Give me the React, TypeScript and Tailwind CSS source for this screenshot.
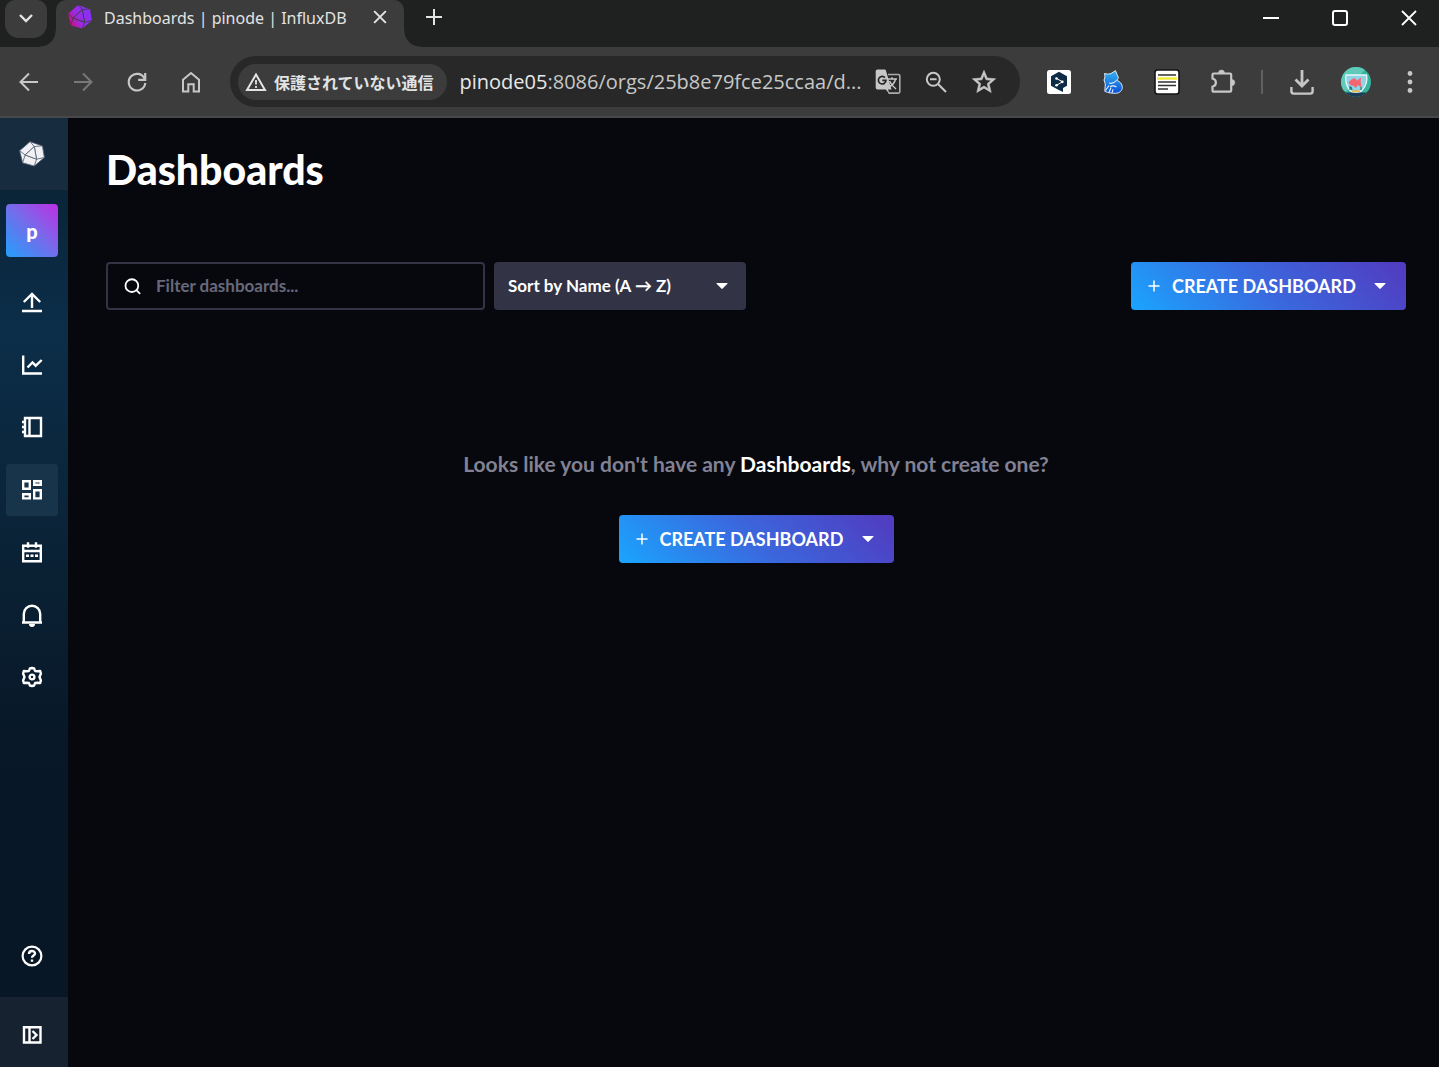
import React from "react";

type IconProps = { className?: string };

function Polyhedron({ fill, line, className }: { fill: string; line: string; className?: string }) {
  return (
    <svg viewBox="0 0 80 80" className={className} aria-hidden="true">
      <defs>
        <linearGradient id="brand" gradientUnits="userSpaceOnUse" x1="2" y1="60" x2="60" y2="30">
          <stop offset="0" stopColor="#d30971" />
          <stop offset="0.55" stopColor="#9a2be2" />
          <stop offset="1" stopColor="#8b2ff5" />
        </linearGradient>
      </defs>
      <g fill={fill} stroke={line} strokeWidth="2.500" strokeLinejoin="round">
        <path d="M34 2 72 15 78 51 47 77 11 67 2 30Z" />
        <path d="M2 30 34 2 47 17 19 43Z" />
        <path d="M47 17 72 15 78 51 54 56Z" />
        <path d="M19 43 54 56 47 77 11 67Z" />
        <path d="M47 17 54 56 19 43Z" />
      </g>
    </svg>
  );
}

function Line({ children, className = "size-6", width = 2 }: { children: React.ReactNode; className?: string; width?: number }) {
  return (
    <svg viewBox="0 0 24 24" fill="none" stroke="currentColor" strokeWidth={width} className={className} aria-hidden="true">
      {children}
    </svg>
  );
}

const Caret = ({ className }: IconProps) => (
  <svg viewBox="0 0 12 6" className={`h-1.5 w-3 ${className ?? ""}`} fill="currentColor" aria-hidden="true">
    <path d="M1 0h10q1 0 .4.7L6.7 5.600q-.7.7-1.400 0L.6.7Q0 0 1 0Z" />
  </svg>
);

function ToolButton({ label, className = "text-[#c7c7c7]", children }: { label: string; className?: string; children: React.ReactNode }) {
  return (
    <button type="button" aria-label={label} className={`flex h-12 w-[54px] shrink-0 items-center justify-center ${className}`}>
      {children}
    </button>
  );
}

function PillButton({ label, children }: { label: string; children: React.ReactNode }) {
  return (
    <button type="button" aria-label={label} className="flex h-12 w-12 shrink-0 items-center justify-center text-[#c7c7c7]">
      {children}
    </button>
  );
}

function TabStrip() {
  return (
    <div className="flex h-[47px] items-start bg-[#1f2120] text-[#e3e3e3]">
      <div className="flex h-full w-14 shrink-0 flex-col justify-between">
        <button type="button" aria-label="Search tabs" className="ml-[5px] flex h-[38px] w-[42px] items-center justify-center rounded-b-[14px] rounded-t-[10px] bg-[#3c3c3c]">
          <Line className="size-6" width={2.4}>
            <path d="m6 8 6 6 6-6" />
          </Line>
        </button>
        <div className="-mt-4 size-4 self-end bg-[radial-gradient(circle_at_0_0,transparent_15px,#3c3c3c_16px)]" />
      </div>
      <div className="flex h-full w-[348px] shrink-0 items-start rounded-t-[10px] bg-[#3c3c3c] pl-[11px] pr-[14px] pt-1">
        <Polyhedron fill="url(#brand)" line="#3c3c3c" className="size-[26px] shrink-0" />
        <span className="ml-[11px] flex-1 whitespace-nowrap font-['Noto_Sans',sans-serif] text-[16px] leading-[29px]">Dashboards | pinode | InfluxDB</span>
        <button type="button" aria-label="Close tab" className="flex h-[26px] w-5 items-center justify-center">
          <Line className="size-5" width={2.4}>
            <path d="m5 5 14 14M19 5 5 19" />
          </Line>
        </button>
      </div>
      <div className="size-4 shrink-0 self-end bg-[radial-gradient(circle_at_100%_0,transparent_15px,#3c3c3c_16px)]" />
      <button type="button" aria-label="New tab" className="ml-0.5 flex h-[34px] w-6 items-center justify-center">
        <Line className="size-6" width={2}>
          <path d="M12 4v16M4 12h16" />
        </Line>
      </button>
      <div className="ml-auto flex h-9 items-center gap-[53px] pr-[22px] text-white">
        <button type="button" aria-label="Minimize" className="size-4">
          <svg viewBox="0 0 16 16" className="size-4"><path d="M0 8h16" stroke="currentColor" strokeWidth="2" /></svg>
        </button>
        <button type="button" aria-label="Maximize" className="size-4">
          <svg viewBox="0 0 16 16" className="size-4"><rect x="1" y="1" width="14" height="14" rx="2" fill="none" stroke="currentColor" strokeWidth="2" /></svg>
        </button>
        <button type="button" aria-label="Close" className="size-4">
          <svg viewBox="0 0 16 16" className="size-4"><path d="m1 1 14 14M15 1 1 15" stroke="currentColor" strokeWidth="1.800" /></svg>
        </button>
      </div>
    </div>
  );
}

function Toolbar() {
  return (
    <div className="flex h-[71px] items-center border-b-2 border-[#47484b] bg-[#3c3c3c] px-0.5">
      <ToolButton label="Back">
        <Line><path d="M21 12H4M12 3.500 3.500 12l8.500 8.500" /></Line>
      </ToolButton>
      <ToolButton label="Forward" className="text-[#787878]">
        <Line><path d="M3 12h17M12 3.500l8.500 8.500-8.500 8.500" /></Line>
      </ToolButton>
      <ToolButton label="Reload">
        <Line width={2.2}>
          <path d="M19.500 8.500A8.300 8.300 0 1 0 20.300 13" />
          <path d="M20.200 3v6.800h-7" />
        </Line>
      </ToolButton>
      <ToolButton label="Home">
        <Line><path d="M4 21.500V9.700L12 3l8 6.700v11.800h-5.300v-7.300H9.300v7.300Z" /></Line>
      </ToolButton>
      <div className="ml-3 mr-3 flex h-[51px] min-w-0 flex-1 items-center rounded-full bg-[#282828] pl-2 pr-3">
        <button type="button" className="flex h-9 shrink-0 items-center rounded-full bg-[#3c3c3c] pl-[7px] pr-[13px] text-[#e3e3e3]">
          <svg viewBox="0 0 22 20" className="h-5 w-[22px]" aria-hidden="true">
            <path d="M11 2.500 20 18H2Z" fill="none" stroke="currentColor" strokeWidth="2" />
            <path d="M11 8v4.500M11 14v2" stroke="currentColor" strokeWidth="1.800" />
          </svg>
          <span className="ml-[7px] whitespace-nowrap font-['Noto_Sans_CJK_JP',sans-serif] text-base font-bold leading-6">保護されていない通信</span>
        </button>
        <div className="ml-[13px] min-w-0 flex-1 overflow-hidden whitespace-nowrap text-xl leading-7 text-[#c7c7c7]">
          <span className="text-[#e8e8e8]">pinode05</span>:8086/orgs/25b8e79fce25ccaa/d...
        </div>
        <PillButton label="Translate">
          <svg viewBox="0 0 26 26" className="size-[26px]" aria-hidden="true">
            <path d="M13 5.500h10.500a1.300 1.300 0 0 1 1.300 1.300v16a1.300 1.300 0 0 1-1.300 1.300H13.500" fill="none" stroke="#aaa" strokeWidth="1.600" />
            <path d="M12 10h10M17 8.300V10M20.500 10c-.7 3-3 6-5.500 7.500M14.500 12c1 2.500 3.500 5.500 6.500 8" fill="none" stroke="#c7c7c7" strokeWidth="1.500" />
            <path d="M2.500.5h7.200a1.300 1.300 0 0 1 1.200.9L16.500 20.500H13l1.800 5-4-5H2.500A1.800 1.800 0 0 1 .7 18.700V2.300A1.800 1.800 0 0 1 2.500.5Z" fill="#c7c7c7" />
            <path d="M10 8.600A3.800 3.800 0 1 0 11 11.300H7.300" fill="none" stroke="#282828" strokeWidth="1.700" />
          </svg>
        </PillButton>
        <PillButton label="Zoom">
          <Line>
            <circle cx="9.300" cy="9.300" r="6.500" />
            <path d="m14 14 8 8M6 9.300h6.600" />
          </Line>
        </PillButton>
        <PillButton label="Bookmark this page">
          <svg viewBox="0 0 24 24" className="size-7" fill="currentColor" stroke="currentColor" strokeWidth="0.500" aria-hidden="true">
            <path d="m22 9.240-7.190-.62L12 2 9.190 8.630 2 9.240l5.460 4.730L5.820 21 12 17.270 18.180 21l-1.630-7.030L22 9.240ZM12 15.400l-3.760 2.270 1-4.280-3.320-2.880 4.380-.38L12 6.100l1.710 4.040 4.380.38-3.320 2.880 1 4.280L12 15.400Z" />
          </svg>
        </PillButton>
      </div>
      <ToolButton label="DeepL">
        <svg viewBox="0 0 24 24" className="size-6" aria-hidden="true">
          <rect width="24" height="24" rx="2.500" fill="#fff" />
          <path d="M12 1.800 20 6.300v9.500l-4 2.300v4l-4.200-2.200L4 15.800V6.300Z" fill="#0f2b46" />
          <path d="m9.500 8.500 6 3.300-6 3.500" fill="none" stroke="#fff" strokeWidth="1" />
          <circle cx="9.500" cy="8.500" r="1.300" fill="#fff" /><circle cx="15.300" cy="11.800" r="1.400" fill="#fff" /><circle cx="9.500" cy="15.300" r="1.300" fill="#fff" />
        </svg>
      </ToolButton>
      <ToolButton label="Blue cat">
        <svg viewBox="0 0 20 24" className="h-6 w-5" aria-hidden="true">
          <defs><linearGradient id="cat" x1="0" y1="0" x2="0" y2="1"><stop offset="0" stopColor="#35b4ee" /><stop offset="1" stopColor="#0b4fd8" /></linearGradient></defs>
          <path d="M1.500 3.500 5 4.200 8 3.500 12.500.6 14 4.500l1.500 3.200-1.800 2.600C17 11.500 19.300 14 19.300 17.300c0 3.600-3 6-6.800 6-3.600 0-7.300-.3-10.700-2L2.300 14 1 10l1-3Z" fill="url(#cat)" stroke="#d9e8f5" strokeWidth="1" />
          <path d="M6 13c2 .8 5 .3 7.500-2.500M7 16.500c2.500-1 4.500-.8 6.500.5M2.500 20.500 6 15.500M6 22.500l2-5M9 22.800l1-3.500" fill="none" stroke="#e6f4ff" strokeWidth="1.100" />
        </svg>
      </ToolButton>
      <ToolButton label="Reader notes">
        <svg viewBox="0 0 26 26" className="size-[26px]" aria-hidden="true">
          <rect x="1" y="1" width="24" height="24" rx="2.500" fill="#fff" stroke="#151515" strokeWidth="1.600" />
          <path d="M4 6h18M4 13h18M4 16.500h18M4 20h10" stroke="#303030" strokeWidth="1.500" />
          <path d="M3 9.500h20" stroke="#f1ea3c" strokeWidth="2.500" />
        </svg>
      </ToolButton>
      <ToolButton label="Extensions">
        <svg viewBox="0 0.500 26 26" className="ml-1 size-[26px]" aria-hidden="true">
          <path d="M2.500 10V6.200q0-1.200 1.200-1.200H20q1.200 0 1.200 1.200V22q0 1.200-1.200 1.200H3.700q-1.200 0-1.200-1.200v-3.800c4.500-1 4.500-7.200 0-8.200Z" fill="none" stroke="currentColor" strokeWidth="2.200" />
          <path d="M8.500 4.500a3 3 0 0 1 6 0ZM21.700 11a3 3 0 0 1 0 6.200Z" fill="currentColor" stroke="currentColor" strokeWidth="0.500" />
        </svg>
      </ToolButton>
      <div className="flex w-[27px] shrink-0 justify-center"><div className="h-6 w-0.5 bg-[#606060]" /></div>
      <ToolButton label="Downloads">
        <svg viewBox="0 0 26 26" className="size-[26px]" fill="none" stroke="currentColor" strokeWidth="2.800" aria-hidden="true">
          <path d="M13 1v15M6.500 10.500 13 17l6.500-6.500" />
          <path d="M2.400 18v4.300q0 2.300 2.300 2.300h16.600q2.300 0 2.300-2.300V18" strokeWidth="2.400" />
        </svg>
      </ToolButton>
      <ToolButton label="Profile">
        <svg viewBox="0 0 30 30" className="size-[30px]" aria-hidden="true">
          <defs><clipPath id="avatar"><circle cx="15" cy="15" r="15" /></clipPath></defs>
          <g clipPath="url(#avatar)">
            <rect width="30" height="30" fill="#36b39d" />
            <path d="M0 0h26L6 24H0Z" fill="#5fcab8" />
            <rect y="25.500" width="30" height="5" fill="#1f3a55" />
            <path d="M5 8h20.500q1.800 8.500-4.500 15.500-1.500 1.500-4 1.500h-4q-2.500 0-4-1.500Q3.500 17 5 8Z" fill="#8fd3e6" stroke="#e8f8fb" strokeWidth="1.300" />
            <path d="M11 24q4-2 8 0v1h-8Z" fill="#f4b74a" />
            <path d="M7.500 15.500c1.500-2.500 4-3.500 6-4.500l2.500 2.500 4-3-.3 4.500.8 5.500-3.500-2.500-2.500 3-2-2.200c-2.500 0-4-1.300-5-3.300Z" fill="#f5646f" />
            <path d="M9 23v-4M11 23l-1-3M20 23v-3" stroke="#23796b" strokeWidth="1.200" />
          </g>
        </svg>
      </ToolButton>
      <ToolButton label="Menu">
        <svg viewBox="0 0 6 22" className="h-[22px] w-1.5" fill="currentColor" aria-hidden="true">
          <circle cx="3" cy="2.500" r="2.400" /><circle cx="3" cy="11" r="2.400" /><circle cx="3" cy="19.500" r="2.400" />
        </svg>
      </ToolButton>
    </div>
  );
}

const navItems: { label: string; icon: React.ReactNode }[] = [
  { label: "Load Data", icon: <path d="M2 21h20M12 18V4M3.800 12 12 4l8.200 8" /> },
  { label: "Data Explorer", icon: <path d="M3.200 2.500V20.500H22M7.500 14.500l5-5 3.200 3.200 6-5.700" /> },
  { label: "Notebooks", icon: <path d="M5 3h16v18H5ZM9.500 3v18M2 7h3M2 12h3M2 17h3" /> },
  { label: "Dashboards", icon: <path d="M3.200 3.200h6.600v7.600H3.200ZM14.200 3.200h6.600v3.600h-6.600ZM3.200 16.200h6.600v4.200H3.200ZM14.200 12.200h6.600v8.200h-6.600Z" /> },
  { label: "Tasks", icon: <path d="M3.200 5.700h17.600v15.600H3.200ZM3 11h18M8 2.300v5.500M16 2.300v5.500M6 15.700h3M10.500 15.700h3M15 15.700h3" /> },
  { label: "Alerts", icon: <><path d="M3.800 19v-8a8.200 8.200 0 0 1 16.400 0v8M2 19.500h20" /><path d="M9 21h6a3 3 0 0 1-6 0Z" fill="currentColor" stroke="none" /></> },
  { label: "Settings", icon: <><path d="M12 3 14.200 3.500 15 6l2.700.2 2.500-.2.700 2.500-1.400 3.500 1.400 3.500-.7 2.500-2.500-.2L15 18l-.8 2.500-2.200.5-2.200-.5L9 18l-2.700-.2-2.500.2-.7-2.500L4.500 12 3.100 8.500 3.800 6l2.500.2L9 6l.8-2.500Z" strokeLinejoin="round" /><circle cx="12" cy="12" r="2.400" /></> },
];

function Sidebar() {
  return (
    <nav aria-label="Main" className="flex w-[68px] shrink-0 flex-col bg-[linear-gradient(180deg,#0a2034_0%,#0a2438_8%,#0c2e49_22%,#0b253a_40%,#081828_65%,#081624_100%)] text-white">
      <a href="#home" aria-label="InfluxDB home" className="flex h-[72px] items-center bg-[#182c3f] pl-[19px]">
        <Polyhedron fill="#f1f1f5" line="#4d5a6b" className="size-[26px]" />
      </a>
      <a href="#org" aria-label="Organization pinode" className="ml-1.5 mt-[14px] flex h-[53px] w-[52px] items-center justify-center rounded-sm bg-[linear-gradient(45deg,#22a0fb,#7a68ea_55%,#be2ee4)] font-['Lato',sans-serif] text-xl font-black">
        p
      </a>
      <div className="ml-1.5 mt-[19px] flex h-[427px] w-[52px] flex-col justify-between">
        {navItems.map(({ label, icon }) => (
          <a
            key={label}
            href={`#${label}`}
            aria-label={label}
            className={`flex h-[52px] items-center justify-center rounded-[3px] ${label === "Dashboards" ? "bg-[#18344b]" : ""}`}
          >
            <Line className="size-6" width={2.4}>{icon}</Line>
          </a>
        ))}
      </div>
      <a href="#help" aria-label="Help" className="mb-[15px] ml-1.5 mt-auto flex h-[52px] w-[52px] items-center justify-center">
        <Line>
          <circle cx="12" cy="12" r="9.400" strokeWidth="2.200" />
          <path d="M9 10c0-4 6-3.800 6-.4 0 2-3 2-3 4.200M12 15.500v2.200" strokeWidth="2.400" />
        </Line>
      </a>
      <button type="button" aria-label="Expand sidebar" className="flex h-[70px] items-center justify-center bg-[#16222f] pt-1.5 pr-1">
        <Line width={2.4}><path d="M4 4.200h16.500v15.300H4ZM9.500 4v15.500M12.500 8l4 4-4 4" /></Line>
      </button>
    </nav>
  );
}

function CreateButton() {
  return (
    <button type="button" className="flex h-12 w-[275px] items-center rounded-sm bg-[linear-gradient(45deg,#1aa5ff,#3b66dc_50%,#523abf)] pl-[17px] pr-5 font-bold text-white">
      <svg viewBox="0 0 12 12" className="size-3" aria-hidden="true"><path d="M6 .5v11M.5 6h11" stroke="currentColor" strokeWidth="1.500" /></svg>
      <span className="ml-3 whitespace-nowrap text-[18px] leading-6">CREATE DASHBOARD</span>
      <Caret className="ml-auto" />
    </button>
  );
}

function DashboardsPage() {
  return (
    <main className="min-w-0 flex-1 bg-[#07080e] pl-[38px] pr-[33px] font-['Lato',sans-serif] text-white">
      <h1 className="pt-7 text-[41px] font-black leading-[48px]">Dashboards</h1>
      <div className="mt-[68px] flex items-center gap-[9px]">
        <div className="flex h-12 w-[379px] items-center rounded-sm border-2 border-[#333346] pl-4">
          <Line className="size-[18px]" width={2.400}>
            <circle cx="10.500" cy="11.500" r="8.500" />
            <path d="m16.500 17.500 5 5" />
          </Line>
          <input type="text" aria-label="Filter dashboards" placeholder="Filter dashboards..." className="ml-[14px] min-w-0 flex-1 bg-transparent text-[17px] font-bold leading-6 outline-none placeholder:text-[#68687b]" />
        </div>
        <div className="relative w-[252px]">
          <select aria-label="Sort dashboards" className="h-12 w-full appearance-none rounded-sm bg-[#333346] pl-[14px] pr-10 text-[17px] font-bold">
            <option>Sort by Name (A → Z)</option>
          </select>
          <Caret className="pointer-events-none absolute right-[18px] top-[21px]" />
        </div>
        <div className="ml-auto"><CreateButton /></div>
      </div>
      <div className="mt-[139px] flex flex-col items-center">
        <p className="text-[21px] font-bold leading-[30px] text-[#828294]">
          Looks like you don't have any <b className="font-bold text-white">Dashboards</b>, why not create one?
        </p>
        <div className="mt-9"><CreateButton /></div>
      </div>
    </main>
  );
}

export default function App() {
  return (
    <div className="flex min-h-screen flex-col bg-[#07080e] font-['Open_Sans',sans-serif]">
      <TabStrip />
      <Toolbar />
      <div className="flex flex-1">
        <Sidebar />
        <DashboardsPage />
      </div>
    </div>
  );
}
